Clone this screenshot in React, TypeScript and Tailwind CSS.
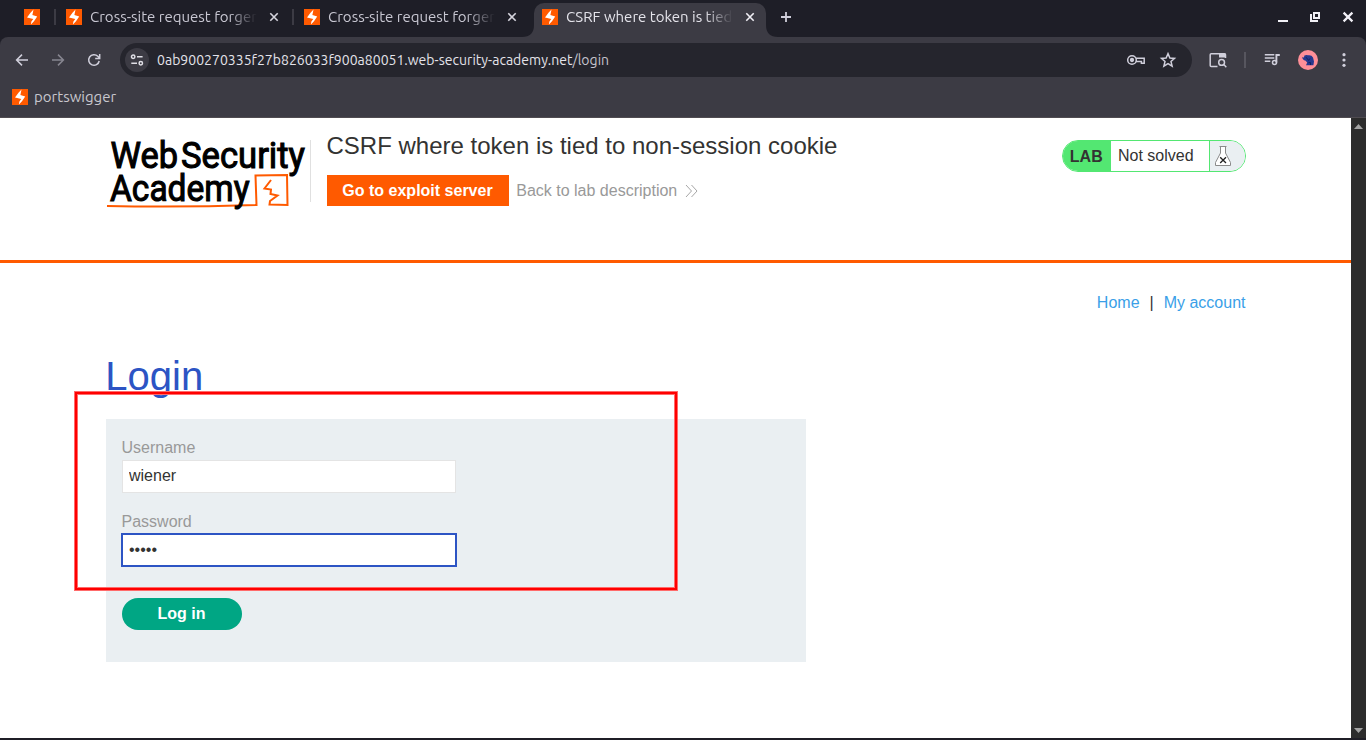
import type { ReactNode } from "react";

function BoltIcon() {
  return (
    <svg width="16" height="16" viewBox="0 0 16 16" className="shrink-0">
      <rect width="16" height="16" fill="#ff5a00" />
      <path d="M9.500 0.500 8.400 6 13.200 7.500 10 12.200 6.900 15.600 7.400 12.600 9.300 9.900 3 8.500 6.500 3.800Z" fill="#fff" />
    </svg>
  );
}

function CloseX({ color }: { color: string }) {
  return (
    <svg width="16" height="16" viewBox="0 0 16 16" className="shrink-0" fill="none" stroke={color} strokeWidth="1.6">
      <path d="M4.3 4.3 11.7 11.7M11.7 4.3 4.3 11.7" />
    </svg>
  );
}

const CHROME_FONT = "font-['Ubuntu','Noto_Sans',sans-serif]";

function TabTitle({ children, className }: { children: string; className: string }) {
  return (
    <span
      className={`ml-2 block w-[167px] overflow-hidden whitespace-nowrap text-[15px] leading-5 [mask-image:linear-gradient(to_right,black_83%,transparent_100%)] ${className}`}
    >
      {children}
    </span>
  );
}

function BackgroundTab({ title }: { title: string }) {
  return (
    <div className="flex h-[34px] w-[238px] shrink-0 items-center">
      <span className="mr-[10px] h-4 w-[2px] bg-[#3c3b44]" />
      <BoltIcon />
      <TabTitle className="text-[#c8c7d2]">{title}</TabTitle>
      <span className="ml-[9px]">
        <CloseX color="#d6d5de" />
      </span>
    </div>
  );
}

function TabStrip() {
  return (
    <div className="flex h-[37px] items-start bg-[#1e1e27] pl-6">
      <div className="flex h-[34px] w-[30px] shrink-0 items-center">
        <BoltIcon />
      </div>
      <BackgroundTab title="Cross-site request forgery" />
      <BackgroundTab title="Cross-site request forgery" />
      <svg width="12" height="37" viewBox="0 0 12 37" className="-ml-2 shrink-0">
        <path d="M0 37Q12 37 12 25V37Z" fill="#3c3b44" />
      </svg>
      <div className="mt-[3px] flex h-[34px] w-[232px] shrink-0 items-start rounded-t-[10px] bg-[#3c3b44] pt-[4px] pl-2">
        <span className="mt-[2px]">
          <BoltIcon />
        </span>
        <TabTitle className="text-[#e4e3ea]">CSRF where token is tied to non-session cookie</TabTitle>
        <span className="mt-[2px] ml-[9px]">
          <CloseX color="#f0eff5" />
        </span>
      </div>
      <svg width="12" height="37" viewBox="0 0 12 37" className="shrink-0">
        <path d="M12 37Q0 37 0 25V37Z" fill="#3c3b44" />
      </svg>
      <svg width="16" height="16" viewBox="0 0 16 16" className="mt-[9px] shrink-0" stroke="#d0cfdb" strokeWidth="1.8">
        <path d="M8 3V13M3 8H13" />
      </svg>
      <div className="ml-auto flex items-center gap-4 pt-[9px] pr-[10px]">
        <svg width="16" height="16" viewBox="0 0 16 16">
          <path d="M2 11H12V13H2Z" fill="#f2f1f7" />
        </svg>
        <svg width="16" height="16" viewBox="0 0 16 16" fill="none" stroke="#f2f1f7" strokeWidth="2">
          <path d="M6 4H11V9H6Z" />
          <path d="M3 5V12H10" />
        </svg>
        <svg width="16" height="16" viewBox="0 0 16 16" stroke="#f2f1f7" strokeWidth="2.2">
          <path d="M3.6 3.6 12.4 12.4M12.4 3.6 3.6 12.4" />
        </svg>
      </div>
    </div>
  );
}

function Glyph({ children, className = "" }: { children: ReactNode; className?: string }) {
  return (
    <svg width="20" height="20" viewBox="0 0 20 20" fill="none" stroke="#d0cfdb" strokeWidth="1.5" className={`shrink-0 ${className}`}>
      {children}
    </svg>
  );
}

function Toolbar() {
  return (
    <div className="bg-[#1e1e27]">
      <div className="flex h-[46px] items-center rounded-t-[8px] bg-[#3c3b44] pr-3 pl-3">
        <Glyph>
          <path d="M16 10H5M10 4.6 4.6 10 10 15.4" />
        </Glyph>
        <Glyph className="ml-4 opacity-50">
          <path d="M4 10H15M10 4.6 15.4 10 10 15.4" />
        </Glyph>
        <Glyph className="ml-4">
          <path d="M15.2 11A5.3 5.3 0 1 1 13.8 6.3L15.5 8M15.7 4V8.4H11.2" />
        </Glyph>
        <div className="ml-4 flex h-[34px] w-[1072px] shrink-0 items-center rounded-full bg-[#25252d] pl-[5px]">
          <span className="flex h-6 w-6 items-center justify-center rounded-full bg-[#3c3b44]">
            <svg width="16" height="16" viewBox="0 0 16 16" fill="none" stroke="#e0dfe6" strokeWidth="1.5">
              <circle cx="4.2" cy="4.8" r="1.7" />
              <path d="M8 4.8H13.6M2.3 11.2H8" />
              <circle cx="11.8" cy="11.2" r="1.7" />
            </svg>
          </span>
          <span className="ml-2 text-[14px] leading-5 tracking-[0.02px] whitespace-nowrap text-[#e4e3ea]">
            0ab900270335f27b826033f900a80051.web-security-academy.net<span className="text-[#c5c4ce]">/login</span>
          </span>
          <Glyph className="mr-3 ml-auto">
            <circle cx="6" cy="10" r="4.3" />
            <circle cx="6" cy="10" r="1.4" fill="#d0cfdb" />
            <path d="M10 8.3H18.2V13.2H15.4V11.4H10" />
          </Glyph>
          <Glyph className="mr-[14px]">
            <path d="M10 3.6 11.9 8 16.5 8.4 13 11.5 14.1 16.1 10 13.6 5.9 16.1 7 11.5 3.5 8.4 8.1 8Z" strokeWidth="1.5" />
          </Glyph>
        </div>
        <Glyph className="ml-4">
          <path d="M9.5 16.5H3.2Q2.2 16.5 2.2 15.5V4.8Q2.2 3.8 3.2 3.8H16.5Q17.5 3.8 17.5 4.8V8" />
          <path d="M11 3.5H17.5V7.5H11Z" fill="#d0cfdb" stroke="none" />
          <circle cx="13.6" cy="12.4" r="2.9" />
          <path d="M15.8 14.6 18.3 17.2" />
        </Glyph>
        <span className="ml-4 h-4 w-[2px] bg-[#57565f]" />
        <Glyph className="ml-[16px]">
          <path d="M2.800 4.800H12.300M2.800 8H12.300M2.800 11.200H8.300" />
          <path d="M14.400 12.500V5H17.800" strokeWidth="1.900" />
          <circle cx="12.500" cy="12.600" r="2" strokeWidth="1.500" />
        </Glyph>
        <svg width="20" height="20" viewBox="0 0 20 20" className="ml-4 shrink-0">
          <circle cx="10" cy="10" r="10" fill="#ff8f98" />
          <path d="M4 6.800Q4.800 8 6 7.200L6.400 5.600Q8.500 4.500 10 5.300Q13.600 4.700 15 7.400L16 11.500 15.400 15.300H8L9.200 12.600 7.300 10.600Q5 10.800 4 6.800Z" fill="#26388e" />
          <path d="M8 7.200 10.600 10.400 12 8.400M10.500 12.600H12.500V15" stroke="#15205c" strokeWidth="1" fill="none" />
        </svg>
        <svg width="20" height="20" viewBox="0 0 20 20" className="ml-auto shrink-0" fill="#d0cfdb">
          <circle cx="10" cy="4.7" r="1.6" />
          <circle cx="10" cy="10" r="1.6" />
          <circle cx="10" cy="15.3" r="1.6" />
        </svg>
      </div>
      <div className="flex h-[35px] items-start border-b border-[#504c51] bg-[#3c3b44] pt-[4px] pl-3">
        <span className="mt-[2px]">
          <BoltIcon />
        </span>
        <span className="ml-[6px] text-[15px] leading-5 text-[#c8c7ce]">portswigger</span>
      </div>
    </div>
  );
}

function AcademyLogo() {
  return (
    <svg width="204" height="80" viewBox="106 132 204 80" className="shrink-0">
      <path d="M107 206Q180 207.500 256.500 205L255.500 175.500 287 175 287.500 205 269.500 204.500 270 201 277.500 195.500 270.500 194 271 189.500 264.500 188.500 271 180" fill="none" stroke="#ff5a00" strokeWidth="2" />
      <g fill="#000" stroke="#000" strokeWidth="1.1" fontFamily="Roboto, sans-serif" fontSize="37" fontWeight="400">
        <text x="110.500" y="168.200" textLength="67.500" lengthAdjust="spacingAndGlyphs">Web</text>
        <text x="181" y="168.200" textLength="124" lengthAdjust="spacingAndGlyphs">Security</text>
        <text x="110" y="201" textLength="139.500" lengthAdjust="spacingAndGlyphs">Academy</text>
      </g>
    </svg>
  );
}

function LabHeader() {
  return (
    <header className="flex h-[145px] border-b-[3px] border-[#ff5a00] pr-[105px] pl-[106px]">
      <div className="pt-[14px]">
        <AcademyLogo />
      </div>
      <span className="mt-[22px] h-[62px] w-px bg-[#e0e0e0]" />
      <div className="ml-4 flex flex-col pt-[13px]">
        <h2 className="-ml-[0.5px] text-[24px] leading-[30px] text-[#333332]">CSRF where token is tied to non-session cookie</h2>
        <div className="mt-[14px] flex h-[31px] items-center">
          <a className="flex h-[31px] w-[182px] items-center justify-center bg-[#ff5a00] pr-px text-[16px] font-bold text-white">Go to exploit server</a>
          <a className="ml-[7.25px] flex items-center text-[16px] text-[#999]">
            Back to lab description
            <svg width="14" height="14" viewBox="0 0 14 14" fill="none" stroke="#a6a6a6" strokeWidth="1" className="ml-2">
              <path d="M1 1 6.500 7 1 13M6.500 1 12 7 6.500 13" />
            </svg>
          </a>
        </div>
      </div>
      <div className="mt-[22px] ml-auto flex h-8 w-[184px] overflow-hidden rounded-full border border-[#53e772] bg-white text-[16px] text-[#333332]">
        <span className="flex w-12 items-center justify-center bg-[#53e772] pt-px pr-[1.5px] font-bold">LAB</span>
        <span className="flex w-[99px] items-center border-r border-[#53e772] pl-[7px]">Not solved</span>
        <span className="flex-1 bg-[#eaeff2] pt-[5px] pl-[4px]">
          <svg width="18" height="21" viewBox="0 0 18 21" fill="none" stroke="#8a8a8a" strokeWidth="1">
            <path d="M6.500 1V7L1.500 16.500V19.500H16.500V16.500L11.500 7V1" fill="#fff" />
            <path d="M5.500 .5H12.500" />
            <path d="M6.200 11.200 12 17M12 11.200 6.200 17" stroke="#222" strokeWidth="1.300" />
          </svg>
        </span>
      </div>
    </header>
  );
}

function LoginPage() {
  return (
    <main className="flex flex-col pr-[105px] pl-[106px]">
      <nav className="mt-[28px] mr-[0.5px] flex justify-end text-[16px] leading-6 whitespace-pre text-[#3a9fe8]">
        <a>Home</a>
        <span className="mx-[10px] text-[#333332]">|</span>
        <a>My account</a>
      </nav>
      <h1 className="mt-[37px] -ml-[0.75px] text-[40px] leading-[48px] text-[#2c54c4]">Login</h1>
      <form className="mt-[19px] flex h-[243px] w-[700px] flex-col items-start bg-[#eaeff2] pl-4 text-[16px]">
        <label className="mt-[19px] -ml-[0.5px] leading-[19px] text-[#999]">Username</label>
        <input
          className="mt-[3px] h-[33px] w-[334px] border border-[#e4e4e4] bg-white px-[6px] pb-px text-[#333332] outline-none"
          defaultValue="wiener"
        />
        <label className="mt-[19px] -ml-[0.5px] leading-[19px] text-[#999]">Password</label>
        <input
          type="password"
          className="mt-[2px] -ml-px h-[34px] w-[336px] border-2 border-[#2c54c4] bg-white px-[6px] text-[#333332] outline-none"
          defaultValue="peter"
        />
        <button type="button" className="mt-[31px] h-8 w-[120px] rounded-full bg-[#00a684] pr-px font-bold text-white">
          Log in
        </button>
      </form>
    </main>
  );
}

function Scrollbar() {
  return (
    <div className="flex w-[15px] shrink-0 flex-col items-center justify-between bg-[#2c2c2c] pt-[6px] pb-[5px]">
      <svg width="9" height="5" viewBox="0 0 9 5" fill="#a2a2a2">
        <path d="M4.500 0 9 5H0Z" />
      </svg>
      <svg width="9" height="5" viewBox="0 0 9 5" fill="#a2a2a2">
        <path d="M0 0H9L4.500 5Z" />
      </svg>
    </div>
  );
}

export default function App() {
  return (
    <div className="relative h-[740px] w-[1366px] overflow-hidden bg-[#1f1e26] font-['Liberation_Sans',Arial,sans-serif]">
      <div className={CHROME_FONT}>
        <TabStrip />
        <Toolbar />
      </div>
      <div className="flex h-[620px]">
        <div className="flex-1 bg-white">
          <LabHeader />
          <LoginPage />
        </div>
        <Scrollbar />
      </div>
      <div className="pointer-events-none absolute top-[391px] left-[74px] h-[200px] w-[604px] border-4 border-[#ff6b6b] p-0">
        <div className="-m-[3px] h-[198px] w-[602px] border-2 border-[#ff0000]" />
      </div>
    </div>
  );
}
